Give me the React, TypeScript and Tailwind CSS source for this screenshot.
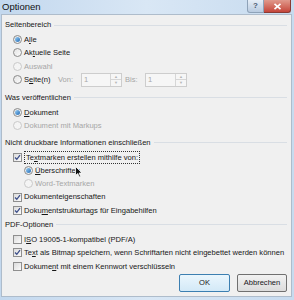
import React from "react";

const font = { fontFamily: '"Liberation Sans", Arial, sans-serif' };

function Radio({ checked = false, disabled = false }: { checked?: boolean; disabled?: boolean }) {
  return (
    <span
      className={`mr-[2px] flex h-[9px] w-[9px] shrink-0 items-center justify-center rounded-full border ${
        disabled ? "border-[#c9c9c9] bg-[#f4f4f4]" : "border-[#8b8b8b] bg-gradient-to-br from-[#e4e4e4] to-[#fbfbfb]"
      }`}
    >
      {checked && <span className="h-[5px] w-[5px] rounded-full bg-gradient-to-br from-[#9ad0f5] to-[#1f6bb5]" />}
    </span>
  );
}

function Check({ checked = false }: { checked?: boolean }) {
  return (
    <span className="mr-[2px] flex h-[9px] w-[9px] shrink-0 items-center justify-center border border-[#8f8f8f] bg-gradient-to-br from-[#dcdcdc] to-[#fbfbfb]">
      {checked && (
        <svg width="7" height="7" viewBox="0 0 7 7">
          <path d="M1 3.5 L2.8 5.3 L6 1.2" fill="none" stroke="#3d4f8a" strokeWidth="1.3" />
        </svg>
      )}
    </span>
  );
}

function Header({ children }: { children: React.ReactNode }) {
  return (
    <div className="flex h-[16px] items-center pl-[3px] pr-[4px]">
      <span>{children}</span>
      <span className="ml-[3px] h-px flex-1 bg-[#d9dee4]" />
    </div>
  );
}

function Row({ children, indent = false }: { children: React.ReactNode; indent?: boolean }) {
  return (
    <div className={`flex h-[13.3px] items-center ${indent ? "pl-[22px]" : "pl-[11px]"}`}>{children}</div>
  );
}

function Spin({ w }: { w: string }) {
  return (
    <div className={`flex h-[14px] ${w} border border-[#cdcdcd] bg-[#f6f6f6]`}>
      <span className="flex-1 pl-[2px] leading-[12px] text-[#a8a8a8]">1</span>
      <div className="flex w-[11px] flex-col border-l border-[#d6d6d6]">
        <span className="flex flex-1 items-center justify-center border-b border-[#d6d6d6] text-[4px] leading-none text-[#b5b5b5]">▲</span>
        <span className="flex flex-1 items-center justify-center text-[4px] leading-none text-[#b5b5b5]">▼</span>
      </div>
    </div>
  );
}

export default function App() {
  return (
    <div className="relative flex h-[300px] w-[294px] flex-col bg-gradient-to-r from-[#c3d8ee] via-[#d9e7f5] to-[#c7dbef] text-[7.55px]" style={font}>
      {/* title bar */}
      <div className="flex h-[14px] items-start">
        <span className="pl-[2px] text-[9.5px] leading-[13px] text-[#111]">Optionen</span>
        <div className="ml-auto mr-[3px] flex">
          <span className="flex h-[13px] w-[17px] items-center justify-center rounded-bl-[3px] border border-t-0 border-[#8ea2b8] bg-gradient-to-b from-[#e6eef7] to-[#b9cbe0] text-[8px] font-bold text-[#4a5a70]">?</span>
          <span className="flex h-[13px] w-[27px] items-center justify-center rounded-br-[3px] border border-l-0 border-t-0 border-[#8a3a33] bg-gradient-to-b from-[#e0998c] to-[#c4443a]">
            <svg width="9" height="7" viewBox="0 0 9 7">
              <path d="M1.5 0.8 L7.5 6.2 M7.5 0.8 L1.5 6.2" stroke="#fff" strokeWidth="1.6" />
            </svg>
          </span>
        </div>
      </div>

      {/* body */}
      <div className="ml-[1px] mr-[2px] flex h-[283px] flex-col border border-[#aebccb] bg-[#f0f0f0] text-[#161616]">
        <div className="h-[2px]" />
        <Header>Seitenbereich</Header>
        <Row>
          <Radio checked />
          <span>
            A<u>l</u>le
          </span>
        </Row>
        <Row>
          <Radio />
          <span>
            Ak<u>t</u>uelle Seite
          </span>
        </Row>
        <Row>
          <Radio disabled />
          <span className="text-[#a6a6a6]">Auswahl</span>
        </Row>
        <div className="flex h-[14px] items-center pl-[11px]">
          <Radio />
          <span className="w-[34px]">
            S<u>e</u>ite(n)
          </span>
          <span className="w-[23px] text-[#a6a6a6]">Von:</span>
          <Spin w="w-[41px]" />
          <span className="ml-[3px] w-[20px] text-[#a6a6a6]">Bis:</span>
          <Spin w="w-[42px]" />
        </div>

        <div className="h-[3px]" />
        <Header>Was veröffentlichen</Header>
        <Row>
          <Radio checked />
          <span>
            <u>D</u>okument
          </span>
        </Row>
        <Row>
          <Radio disabled />
          <span className="text-[#a6a6a6]">Dokument mit Markups</span>
        </Row>

        <div className="h-[2px]" />
        <Header>Nicht druckbare Informationen einschließen</Header>
        <Row>
          <Check checked />
          <span className="border border-dotted border-[#333] px-[1px] leading-[11px]">
            Te<u>x</u>tmarken erstellen mithilfe von:
          </span>
        </Row>
        <Row indent>
          <Radio checked />
          <span>
            <u>Ü</u>berschriften
          </span>
        </Row>
        <Row indent>
          <Radio disabled />
          <span className="text-[#a6a6a6]">Word-Textmarken</span>
        </Row>
        <Row>
          <Check checked />
          <span>Dokumenteigenschaften</span>
        </Row>
        <Row>
          <Check checked />
          <span>
            Doku<u>m</u>entstrukturtags für Eingabehilfen
          </span>
        </Row>

        <Header>PDF-Optionen</Header>
        <Row>
          <Check />
          <span>
            I<u>S</u>O 19005-1-kompatibel (PDF/A)
          </span>
        </Row>
        <Row>
          <Check checked />
          <span className="whitespace-nowrap">
            Te<u>x</u>t als Bitmap speichern, wenn Schriftarten nicht eingebettet werden können
          </span>
        </Row>
        <Row>
          <Check />
          <span>
            Dokume<u>n</u>t mit einem Kennwort verschlüsseln
          </span>
        </Row>

        <div className="mt-[1px] flex justify-end gap-[7px] pr-[4px]">
          <button className="flex h-[18px] w-[51px] items-center justify-center rounded-[2px] border border-[#3c7fb1] bg-gradient-to-b from-[#eaf6fd] to-[#d3e9f7]">
            OK
          </button>
          <button className="flex h-[18px] w-[50px] items-center justify-center rounded-[2px] border border-[#707070] bg-gradient-to-b from-[#f2f2f2] to-[#dcdcdc]">
            Abbrechen
          </button>
        </div>
      </div>

      {/* mouse cursor */}
      <svg className="absolute left-[75px] top-[166px]" width="8" height="12" viewBox="0 0 8 12">
        <path d="M0.5 0.5 L0.5 9.5 L2.7 7.5 L4.3 11 L5.6 10.4 L4.1 7 L7 7 Z" fill="#111" stroke="#fff" strokeWidth="0.8" />
      </svg>
    </div>
  );
}
